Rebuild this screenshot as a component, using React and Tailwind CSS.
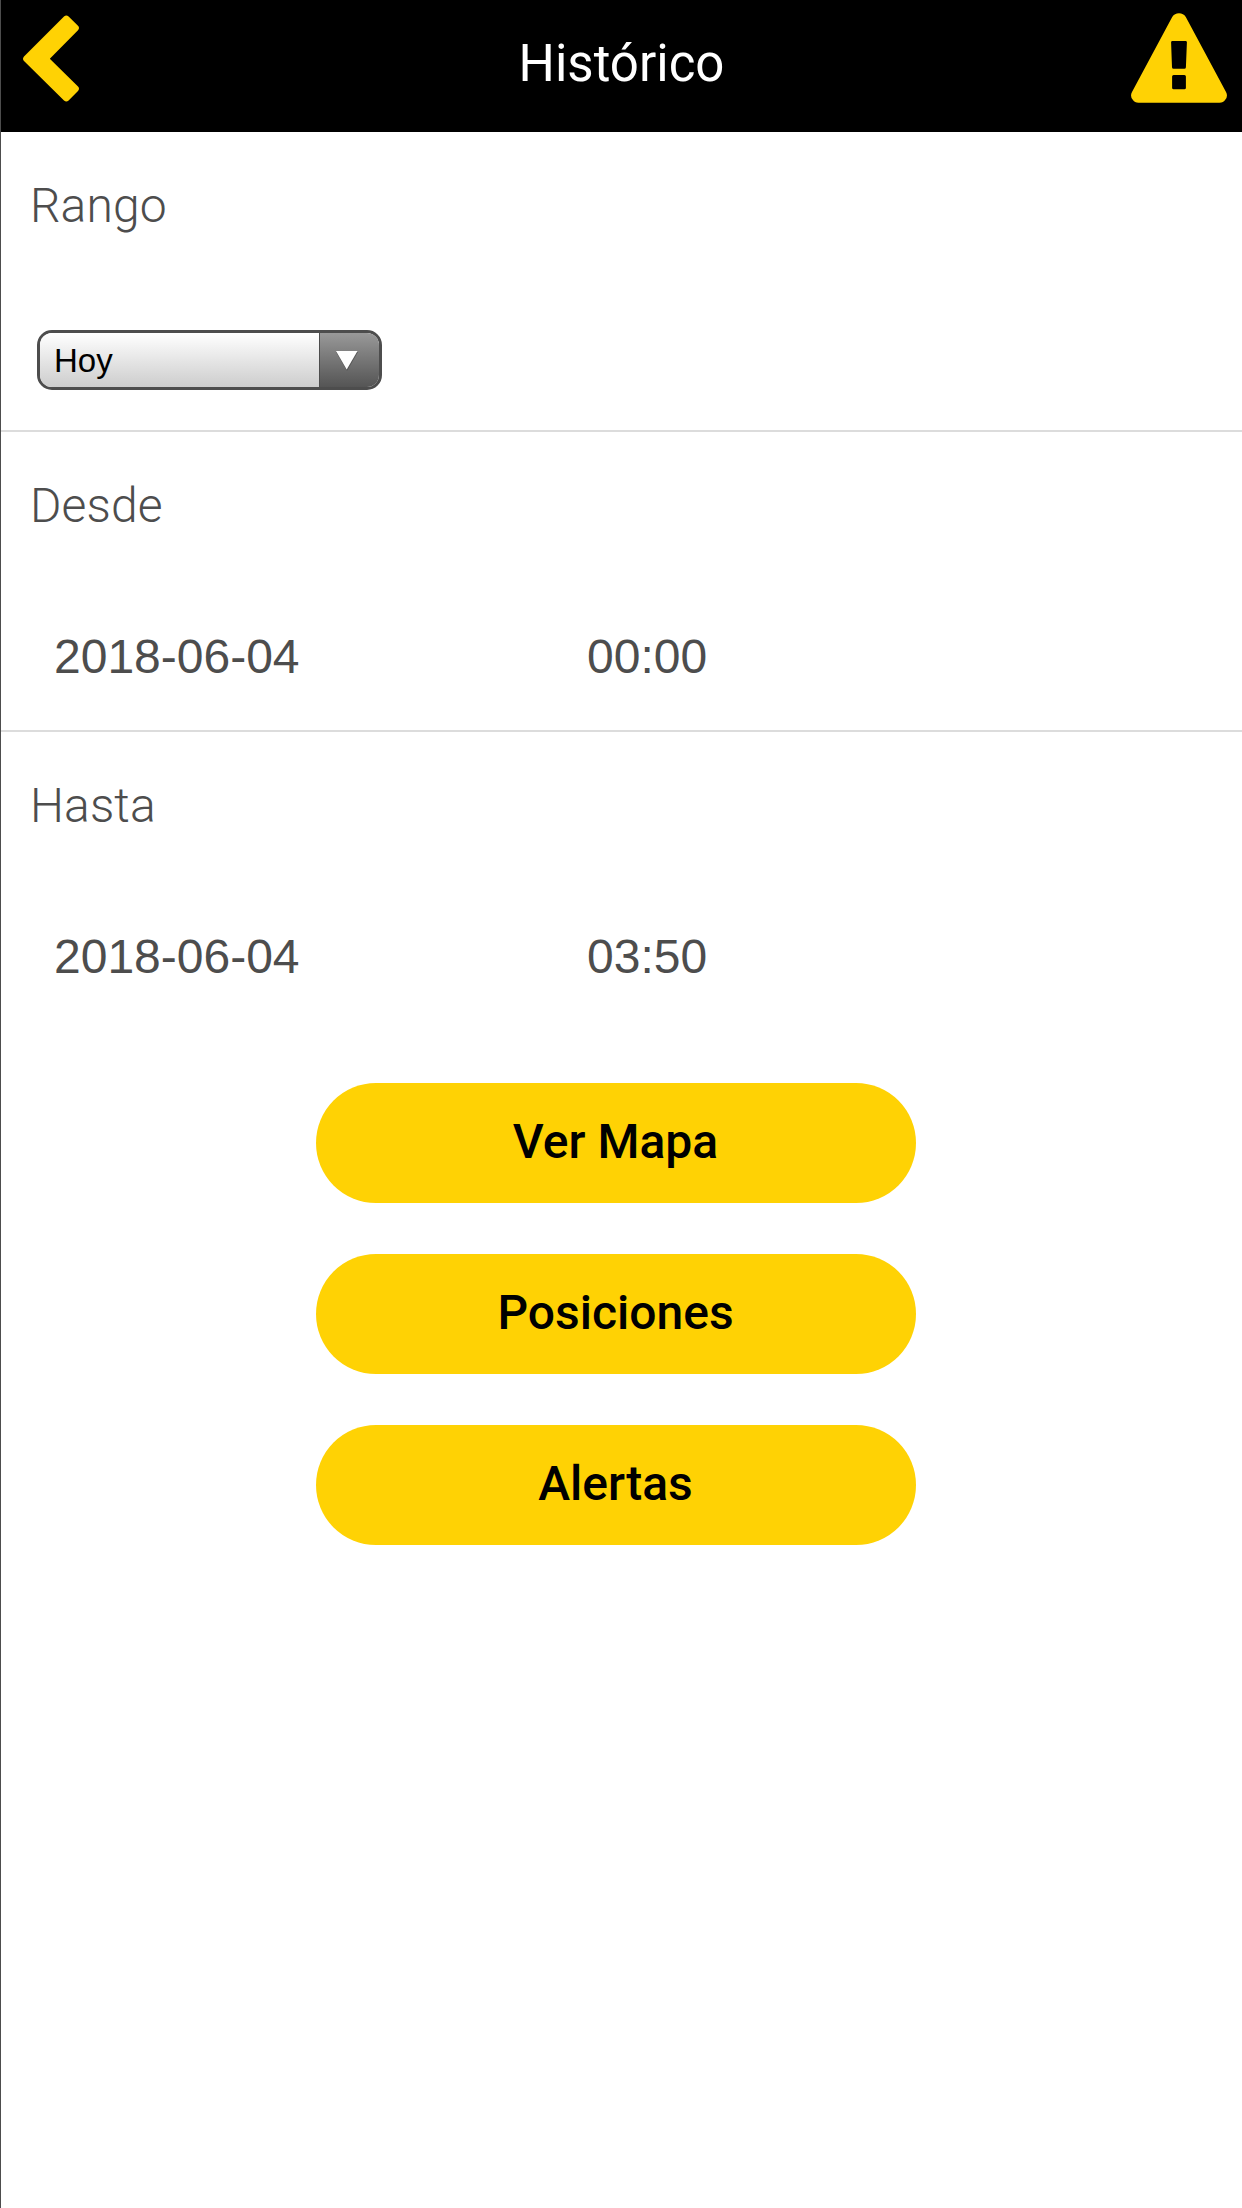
function BackIcon() {
  return (
    <svg className="h-[88px] w-[57px]" viewBox="0 0 57 88">
      <path
        d="M41 1.400Q43.300 -.6 45.600 1.400L55 10.800Q57 13 55 15.200L26.800 43.700L55 71.600Q57 73.800 55 76L45.600 85.600Q43.300 87.600 41 85.600L1 46Q-1 43.700 1 41.400Z"
        fill="#ffd204"
      />
    </svg>
  );
}

function WarningIcon() {
  return (
    <svg className="h-[90px] w-[96px]" viewBox="0 0 96 90">
      <path
        fill="#ffd204"
        fillRule="evenodd"
        d="M41.200 4Q43.600 0.300 48 0.300T54.800 4L95 79Q97.200 83 94.400 86.500Q92.300 89.700 88.500 89.700H7.500Q3.700 89.700 1.600 86.500Q-1.200 83 1 79ZM41.500 28Q40 28 40.100 29.400L41 54.200Q41.100 55.700 42.600 55.700H53.300Q54.800 55.700 54.900 54.200L55.900 29.400Q56 28 54.500 28ZM42.600 62Q41.100 62 41.100 63.500V74.800Q41.100 76.300 42.600 76.300H53.400Q54.900 76.300 54.900 74.800V63.500Q54.900 62 53.400 62Z"
      />
    </svg>
  );
}

function Section({ title, children, last }) {
  return (
    <section
      className={
        "flex h-[300px] flex-col pt-[44px] " +
        (last ? "" : "border-b-2 border-[#dcdcdc]")
      }
    >
      <h2 className="pl-[29px] font-['Roboto',sans-serif] text-[48px] leading-[60px] font-light tracking-[0.1px]">
        {title}
      </h2>
      {children}
    </section>
  );
}

function DateRow({ date, time }) {
  return (
    <div className="mt-[91px] flex pl-[53px] font-['Liberation_Sans',sans-serif] text-[48px] leading-[60px]">
      <span className="w-[533px]">{date}</span>
      <span>{time}</span>
    </div>
  );
}

function ActionButton({ children }) {
  return (
    <button className="h-[120px] w-[600px] rounded-[60px] bg-[#ffd204] pr-[1px] pb-[3px] font-['Roboto',sans-serif] text-[48px] font-medium text-black">
      {children}
    </button>
  );
}

export default function App() {
  return (
    <div className="h-[2208px] w-[1242px] overflow-hidden border-l border-[#4d4d4d] bg-white text-[#4d4d4d]">
      <header className="flex h-[132px] items-start justify-between bg-black pr-[15px] pl-[22px]">
        <div className="w-[96px] pt-[14.500px]">
          <BackIcon />
        </div>
        <h1 className="pt-[34px] pr-[7px] font-['Roboto',sans-serif] text-[51px] leading-[60px] text-white">
          Histórico
        </h1>
        <div className="pt-[13px]">
          <WarningIcon />
        </div>
      </header>
      <Section title="Rango">
        <button className="mt-[94px] ml-[36px] flex h-[60px] w-[345px] overflow-hidden rounded-[15px] border-3 border-[#4d4d4d] font-['Liberation_Sans',sans-serif] text-[33px] text-black">
          <span className="flex h-full flex-1 items-center bg-linear-to-b from-white to-[#cdcdcd] pt-[2px] pl-[14px]">
            Hoy
          </span>
          <span className="flex h-full w-[60px] justify-start border-l border-[#4d4d4d] bg-linear-to-b from-[#999999] to-[#555555] pt-[18px] pl-[16px]">
            <svg className="h-[20px] w-[22px]" viewBox="0 0 22 20">
              <path d="M0 1H22L11 20Z" fill="#555555" />
              <path d="M0 0H21.500L10.700 18.500Z" fill="#ffffff" />
            </svg>
          </span>
        </button>
      </Section>
      <Section title="Desde">
        <DateRow date="2018-06-04" time="00:00" />
      </Section>
      <Section title="Hasta" last>
        <DateRow date="2018-06-04" time="03:50" />
      </Section>
      <div className="mt-[51px] ml-[315px] flex w-[600px] flex-col gap-[51px]">
        <ActionButton>Ver Mapa</ActionButton>
        <ActionButton>Posiciones</ActionButton>
        <ActionButton>Alertas</ActionButton>
      </div>
    </div>
  );
}
